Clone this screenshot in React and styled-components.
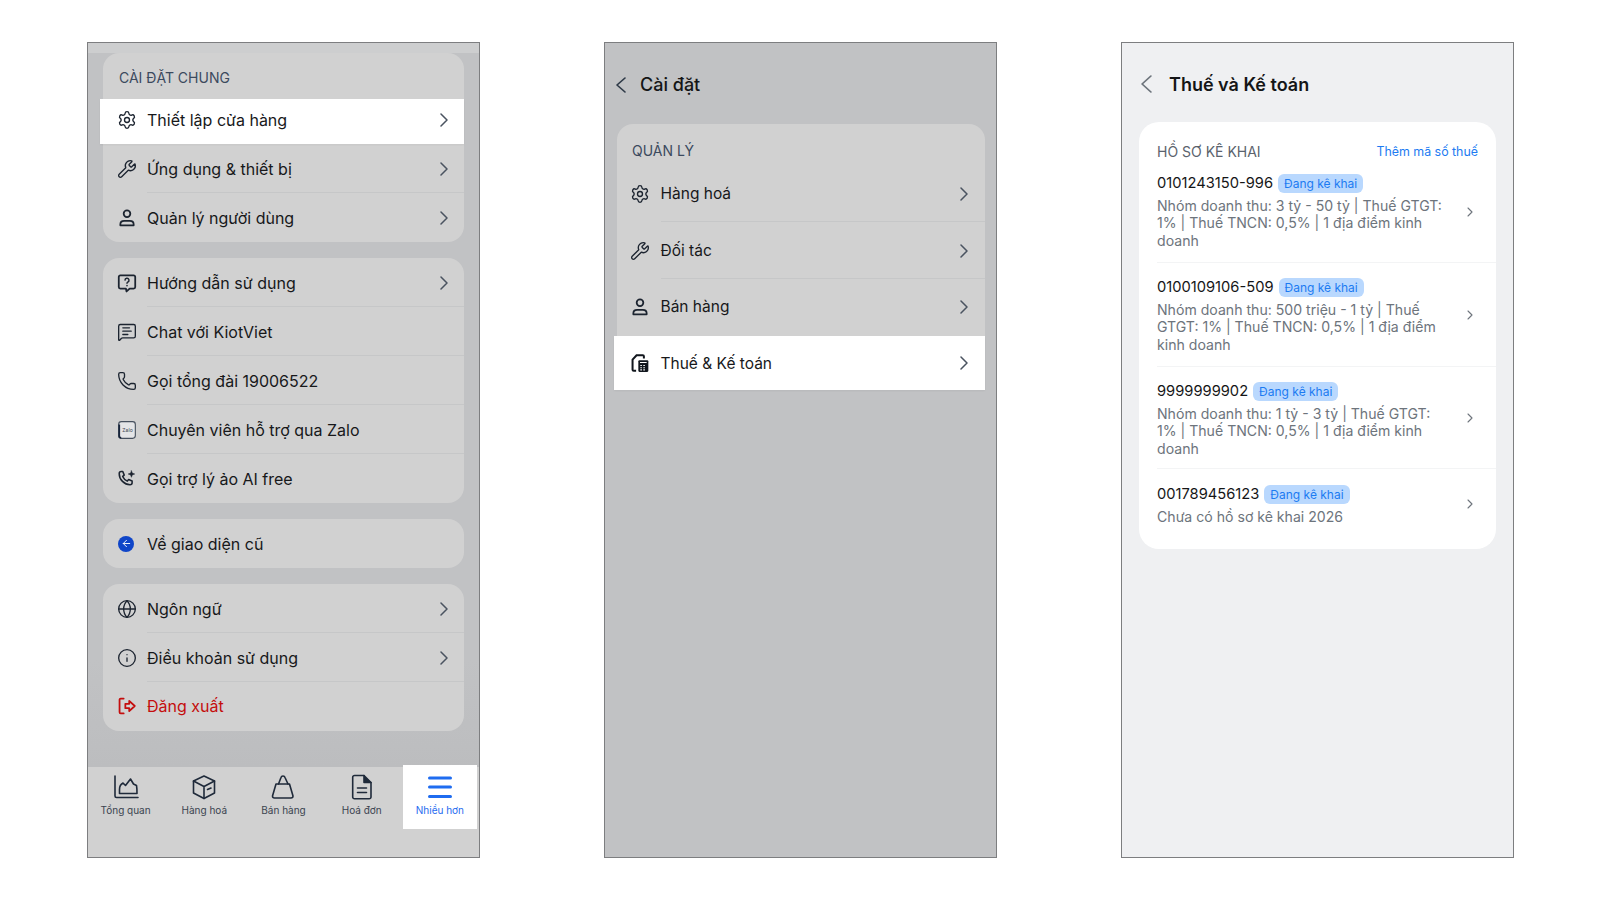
import React from "react";
import styled, { createGlobalStyle } from "styled-components";
import {
  Settings,
  Wrench,
  MessageSquareText,
  Phone,
  Globe,
  Info,
  ArrowLeft,
  ChevronRight,
} from "lucide-react";

const GlobalStyle = createGlobalStyle`
  html, body { margin: 0; padding: 0; background: #fff; }
  body { font-family: Inter, "Noto Sans", sans-serif; color: #161718; }
  * { box-sizing: border-box; }
`;

const Page = styled.div`
  display: flex;
  gap: 124px;
  padding: 42px 0 0 87px;
  width: 1600px;
  height: 900px;
`;

const Frame = styled.div`
  width: 393px;
  height: 816px;
  border: 1px solid #7d7e80;
  background: ${(p) => p.$bg};
  display: flex;
  flex-direction: column;
  overflow: hidden;
`;

const TopStrip = styled.div`
  height: 10px;
  background: #cdcecf;
`;

const Scroll = styled.div`
  flex: 1;
  padding: 0 15px;
  display: flex;
  flex-direction: column;
  gap: 16px;
  background: linear-gradient(#c1c2c4 85%, #bcbdbf 100%);
`;

const Card = styled.div`
  background: #d1d1d1;
  border-radius: 16px;
`;

const CardTitle = styled.div`
  height: ${(p) => p.$height}px;
  padding: ${(p) => p.$top}px 0 0 ${(p) => p.$left}px;
  font-size: 14px;
  line-height: 18px;
  color: #3c4a5e;
`;

const Row = styled.div`
  display: flex;
  align-items: stretch;
  height: ${(p) => p.$height || 49}px;
  padding-left: ${(p) => (p.$active ? p.$inset + 3 : p.$inset)}px;
  padding-bottom: ${(p) => p.$pad || 0}px;
  font-size: ${(p) => p.$font}px;
  color: #17181a;
  ${(p) =>
    p.$active &&
    `
    background: #fff;
    margin-left: -3px;
    box-shadow: 0 1px 2px rgba(0, 0, 0, 0.05);
  `}
`;

const IconSlot = styled.div`
  width: 28px;
  flex: none;
  display: flex;
  align-items: center;
  color: ${(p) => p.$color || "#1c2430"};

  > svg {
    width: 20px;
    height: 20px;
    margin-left: -2.5px;
  }
`;

const RowBody = styled.div`
  flex: 1;
  display: flex;
  align-items: center;
  justify-content: space-between;
  padding: ${(p) => (p.$line ? "1px" : "0")} ${(p) => p.$right}px 0 0;
  border-bottom: ${(p) => (p.$line ? "1px solid #c6c7c8" : "none")};
  color: ${(p) => p.$color || "inherit"};
`;

const Arrow = styled.svg`
  width: ${(p) => p.$w}px;
  height: ${(p) => p.$h}px;
  flex: none;
  fill: none;
  stroke: ${(p) => p.$color || "#4a5360"};
  stroke-width: ${(p) => p.$stroke || 1.5};
  stroke-linecap: round;
  stroke-linejoin: round;
`;

const TabBar = styled.div`
  height: 90px;
  background: #d1d1d1;
  display: grid;
  grid-template-columns: repeat(5, 1fr);
  align-items: start;
`;

const Tab = styled.div`
  display: flex;
  flex-direction: column;
  align-items: center;
  height: ${(p) => (p.$active ? "64px" : "60px")};
  padding-top: ${(p) => (p.$active ? "9px" : "7px")};
  padding-right: ${(p) => p.$shift || 0}px;
  margin: ${(p) => (p.$active ? "-2px 2px 0" : "0")};
  background: ${(p) => (p.$active ? "#fff" : "transparent")};
  position: relative;
  color: ${(p) => (p.$active ? "#1f6cf0" : "#1f2a3a")};
`;

const TabLabel = styled.div`
  font-size: 10px;
  line-height: 13px;
  margin-top: 4px;
  color: ${(p) => (p.$active ? "#1f6cf0" : "#3b4450")};
`;

const Header = styled.div`
  height: ${(p) => p.$height}px;
  flex: none;
  display: flex;
  align-items: center;
  padding: ${(p) => p.$top}px 0 0 ${(p) => p.$left}px;
  font-size: ${(p) => p.$size}px;
  font-weight: ${(p) => p.$weight};
  color: #141516;
`;

const BackSlot = styled.div`
  width: ${(p) => p.$width}px;
  flex: none;
  display: flex;
`;

const SettingsBody = styled.div`
  padding: 0 11px 0 12px;
`;

const TaxBody = styled.div`
  padding: 0 17px;
`;

const TaxCard = styled.div`
  background: #fff;
  border-radius: 20px;
  padding: 18px 0 0 18px;
  height: 427px;
`;

const TaxHead = styled.div`
  display: flex;
  justify-content: space-between;
  align-items: center;
  height: 22px;
  padding-right: 18px;
  font-size: 14px;
  color: #5b636d;
`;

const TaxLink = styled.span`
  font-size: 12.4px;
  color: #1c7bf2;
`;

const Filing = styled.div`
  display: flex;
  align-items: center;
  height: ${(p) => p.$height}px;
  padding: ${(p) => p.$top}px 18px ${(p) => p.$top}px 0;
  border-bottom: ${(p) => (p.$line ? "1px solid #f3f4f5" : "none")};
`;

const FilingMain = styled.div`
  flex: 1;
  align-self: flex-start;
`;

const FilingTop = styled.div`
  display: flex;
  align-items: center;
  gap: 5px;
  height: 20px;
  font-size: 14.7px;
  color: #151617;
`;

const Badge = styled.span`
  background: #b9d8fe;
  color: #1c7bf2;
  border-radius: 6px;
  height: 19px;
  padding: 0 6px;
  font-size: 12px;
  line-height: 19px;
`;

const FilingText = styled.div`
  width: 288px;
  margin-top: 4px;
  font-size: 14.1px;
  line-height: 17.4px;
  color: #6d747c;
`;

const FilingChevron = styled(ChevronRight)`
  color: #6d747c;
  flex: none;
`;

const BlueDot = styled.div`
  width: 16px;
  height: 16px;
  margin-left: -1px;
  border-radius: 50%;
  background: #0f45c8;
  color: #fff;
  display: flex;
  align-items: center;
  justify-content: center;
`;

const stroke = {
  fill: "none",
  stroke: "currentColor",
  strokeWidth: 1.6,
  strokeLinecap: "round",
  strokeLinejoin: "round",
};

const RightArrow = () => (
  <Arrow $w={8} $h={14} viewBox="0 0 8 14">
    <path d="M1 1l6 6-6 6" />
  </Arrow>
);

const BackArrow = ({ w, h, color }) => (
  <Arrow $w={w} $h={h} $color={color} $stroke={1.6} viewBox="0 0 10 18" preserveAspectRatio="none">
    <path d="M9 1L1 9l8 8" />
  </Arrow>
);

const UserIcon = () => (
  <svg viewBox="0 0 18 18" {...stroke}>
    <circle cx="9" cy="5.2" r="3" />
    <path d="M3 15.6v-.8c0-2 1.6-3.2 3.4-3.2h5.2c1.800 0 3.400 1.200 3.400 3.200v.8z" />
  </svg>
);

const HelpIcon = () => (
  <svg viewBox="0 0 18 18" {...stroke}>
    <path d="M3 2.200h12a1.400 1.400 0 0 1 1.400 1.400v9a1.400 1.400 0 0 1-1.400 1.400h-3.600L8.600 16.600 8 14H3a1.400 1.400 0 0 1-1.400-1.400v-9A1.400 1.400 0 0 1 3 2.200z" />
    <path d="M7.200 6.400a1.800 1.800 0 1 1 2.600 1.700c-.5.3-.8.6-.8 1.100" strokeWidth="1.300" />
    <path d="M9 11.300v.1" strokeWidth="1.400" />
  </svg>
);

const ZaloIcon = () => (
  <svg viewBox="0 0 18 18">
    <rect x="1.500" y="1.500" width="15" height="15" rx="2.500" fill="#e4e5e7" stroke="#46505e" strokeWidth="1" />
    <path d="M2 4v10.500c0 1 .8 1.600 1.800 1.600" fill="none" stroke="#16233a" strokeWidth="1.600" />
    <text x="9.500" y="10.600" fontSize="4.600" fontFamily="Inter" textAnchor="middle" fill="#3a4552">
      Zalo
    </text>
  </svg>
);

const CallAiIcon = () => (
  <svg viewBox="0 0 18 18" {...stroke} strokeWidth="1.400">
    <path d="M2 4.200c0-1 .8-1.900 1.800-1.900h1.400l1.300 3.200-1.400 1.200c.8 1.800 2.300 3.300 4.200 4.200l1.200-1.400 3.100 1.300v1.500c0 1-.9 1.800-1.900 1.800C6.600 14.100 2 9.500 2 4.200z" />
    <path
      d="M13 1.500l.8 2.200 2.200.8-2.200.8-.8 2.200-.8-2.200-2.200-.8 2.200-.8z"
      fill="currentColor"
      strokeWidth="0.400"
    />
  </svg>
);

const LogoutIcon = () => (
  <svg viewBox="0 0 18 18" {...stroke}>
    <path d="M6 2.300H3.300a1 1 0 0 0-1 1v11.400a1 1 0 0 0 1 1H6" />
    <path d="M7.500 7h3.500V4.400L16 9l-5 4.600V11H7.500z" />
  </svg>
);

const TaxIcon = () => (
  <svg viewBox="0 0 18 18">
    <path
      d="M5.500 16H3.300a1 1 0 0 1-1-1V6l3.600-4h5.600a1 1 0 0 1 1 1v2"
      fill="none"
      stroke="#11161d"
      strokeWidth="1.800"
    />
    <rect x="7.500" y="6.500" width="9" height="10.500" rx="1" fill="#11161d" />
    <path
      d="M9 8.500h6M9.300 11.300h1.400M12 11.300h1.400M9.300 13.300h1.400M12 13.300h1.400M9.300 15.200h1.400M12 15.200h1.400"
      stroke="#fff"
      strokeWidth="1"
    />
  </svg>
);

const ChartIcon = () => (
  <svg width="28" height="26" viewBox="0 0 28 26" {...stroke}>
    <path d="M3 2v20a1.500 1.500 0 0 0 1.500 1.500H26" />
    <path d="M7.500 19.500v-4c0-3 1.500-5.500 3.500-6.500l2.500 2.500L18.500 5l3 5 3 1.500c.5 2.500.5 5 .5 8z" />
  </svg>
);

const BoxIcon = () => (
  <svg width="26" height="26" viewBox="0 0 26 26" {...stroke}>
    <path d="M13 2l10.500 5v12L13 24.500 2.500 19V7z" />
    <path d="M2.500 7L13 12.500 23.500 7M13 12.500v12M16.500 15.500l3.500-1.500" />
  </svg>
);

const BagIcon = () => (
  <svg width="26" height="26" viewBox="0 0 26 26" {...stroke}>
    <path d="M7 10h12.500l3.500 12a2 2 0 0 1-2 2H4.500a2 2 0 0 1-2-2L6 10z" />
    <path d="M8.500 10l2.500-6.500c.3-1 1-1.500 2-1.500s1.700.5 2 1.500L18 10" />
  </svg>
);

const DocIcon = () => (
  <svg width="24" height="26" viewBox="0 0 24 26" {...stroke}>
    <path d="M4.500 1.500h9.500l7 7v14.500a1.800 1.800 0 0 1-1.800 1.800H4.500A1.800 1.800 0 0 1 2.700 23V3.300a1.800 1.800 0 0 1 1.800-1.800z" />
    <path d="M14 1.500v7h7" fill="currentColor" />
    <path d="M7.500 14h9M7.500 18.500h9" />
  </svg>
);

const MenuIcon = () => (
  <svg width="26" height="26" viewBox="0 0 26 26" fill="none" stroke="currentColor" strokeWidth="3" strokeLinecap="round">
    <path d="M2.500 4h21M2.500 13h21M2.500 22.500h21" />
  </svg>
);

const groups = [
  {
    title: "CÀI ĐẶT CHUNG",
    rows: [
      { icon: <Settings strokeWidth={1.6} />, label: "Thiết lập cửa hàng", arrow: true, active: true, height: 45, pad: 3 },
      { icon: <Wrench strokeWidth={1.6} />, label: "Ứng dụng & thiết bị", arrow: true, line: true },
      { icon: <UserIcon />, label: "Quản lý người dùng", arrow: true },
    ],
  },
  {
    rows: [
      { icon: <HelpIcon />, label: "Hướng dẫn sử dụng", arrow: true, line: true },
      { icon: <MessageSquareText strokeWidth={1.6} />, label: "Chat với KiotViet", line: true },
      { icon: <Phone strokeWidth={1.6} />, label: "Gọi tổng đài 19006522", line: true },
      { icon: <ZaloIcon />, label: "Chuyên viên hỗ trợ qua Zalo", line: true },
      { icon: <CallAiIcon />, label: "Gọi trợ lý ảo AI free" },
    ],
  },
  {
    rows: [
      {
        icon: (
          <BlueDot>
            <ArrowLeft size={11} strokeWidth={2} />
          </BlueDot>
        ),
        label: "Về giao diện cũ",
      },
    ],
  },
  {
    rows: [
      { icon: <Globe strokeWidth={1.6} />, label: "Ngôn ngữ", arrow: true, line: true },
      { icon: <Info strokeWidth={1.6} />, label: "Điều khoản sử dụng", arrow: true, line: true },
      { icon: <LogoutIcon />, label: "Đăng xuất", color: "#c40d0d", pad: 1 },
    ],
  },
];

const tabs = [
  { icon: <ChartIcon />, label: "Tổng quan", shift: 3 },
  { icon: <BoxIcon />, label: "Hàng hoá", shift: 2 },
  { icon: <BagIcon />, label: "Bán hàng" },
  { icon: <DocIcon />, label: "Hoá đơn" },
  { icon: <MenuIcon />, label: "Nhiều hơn", active: true },
];

const manageRows = [
  { icon: <Settings strokeWidth={1.6} />, label: "Hàng hoá", height: 57, arrow: true, line: true },
  { icon: <Wrench strokeWidth={1.6} />, label: "Đối tác", height: 57, arrow: true, line: true },
  { icon: <UserIcon />, label: "Bán hàng", height: 57, arrow: true, pad: 2 },
  { icon: <TaxIcon />, label: "Thuế & Kế toán", height: 54, arrow: true, active: true },
];

const filings = [
  {
    id: "0101243150-996",
    text: "Nhóm doanh thu: 3 tỷ - 50 tỷ | Thuế GTGT: 1% | Thuế TNCN: 0,5% | 1 địa điểm kinh doanh",
    height: 101,
    top: 11,
  },
  {
    id: "0100109106-509",
    text: "Nhóm doanh thu: 500 triệu - 1 tỷ | Thuế GTGT: 1% | Thuế TNCN: 0,5% | 1 địa điểm kinh doanh",
    height: 104,
    top: 14,
  },
  {
    id: "9999999902",
    text: "Nhóm doanh thu: 1 tỷ - 3 tỷ | Thuế GTGT: 1% | Thuế TNCN: 0,5% | 1 địa điểm kinh doanh",
    height: 102,
    top: 14,
  },
  { id: "001789456123", text: "Chưa có hồ sơ kê khai 2026", height: 70, top: 15 },
];

function SettingRow({ row, inset, right, font }) {
  return (
    <Row $active={row.active} $height={row.height} $pad={row.pad} $inset={inset} $font={font}>
      <IconSlot $color={row.color}>{row.icon}</IconSlot>
      <RowBody $line={row.line} $color={row.color} $right={right}>
        {row.label}
        {row.arrow && <RightArrow />}
      </RowBody>
    </Row>
  );
}

export default function App() {
  return (
    <>
      <GlobalStyle />
      <Page>
        <Frame $bg="#c1c2c4">
          <TopStrip />
          <Scroll>
            {groups.map((group, i) => (
              <Card key={i}>
                {group.title && (
                  <CardTitle $height={46} $top={16} $left={16}>
                    {group.title}
                  </CardTitle>
                )}
                {group.rows.map((row) => (
                  <SettingRow key={row.label} row={row} inset={16} right={16} font={16} />
                ))}
              </Card>
            ))}
          </Scroll>
          <TabBar>
            {tabs.map((tab) => (
              <Tab key={tab.label} $active={tab.active} $shift={tab.shift}>
                {tab.icon}
                <TabLabel $active={tab.active}>{tab.label}</TabLabel>
              </Tab>
            ))}
          </TabBar>
        </Frame>

        <Frame $bg="#c1c2c4">
          <Header $height={81} $top={2} $left={11} $size={18} $weight={500}>
            <BackSlot $width={24}>
              <BackArrow w={10} h={16} color="#2f3a48" />
            </BackSlot>
            Cài đặt
          </Header>
          <SettingsBody>
            <Card>
              <CardTitle $height={41} $top={18} $left={15}>
                QUẢN LÝ
              </CardTitle>
              {manageRows.map((row) => (
                <SettingRow key={row.label} row={row} inset={15.5} right={17} font={15.5} />
              ))}
            </Card>
          </SettingsBody>
        </Frame>

        <Frame $bg="#eff0f2">
          <Header $height={79} $top={3} $left={19} $size={18} $weight={600}>
            <BackSlot $width={28}>
              <BackArrow w={11} h={18} color="#6d747c" />
            </BackSlot>
            Thuế và Kế toán
          </Header>
          <TaxBody>
            <TaxCard>
              <TaxHead>
                HỒ SƠ KÊ KHAI
                <TaxLink>Thêm mã số thuế</TaxLink>
              </TaxHead>
              {filings.map((f, i) => (
                <Filing key={f.id} $height={f.height} $top={f.top} $line={i < 3}>
                  <FilingMain>
                    <FilingTop>
                      {f.id}
                      <Badge>Đang kê khai</Badge>
                    </FilingTop>
                    <FilingText>{f.text}</FilingText>
                  </FilingMain>
                  <FilingChevron size={16} strokeWidth={1.6} />
                </Filing>
              ))}
            </TaxCard>
          </TaxBody>
        </Frame>
      </Page>
    </>
  );
}
